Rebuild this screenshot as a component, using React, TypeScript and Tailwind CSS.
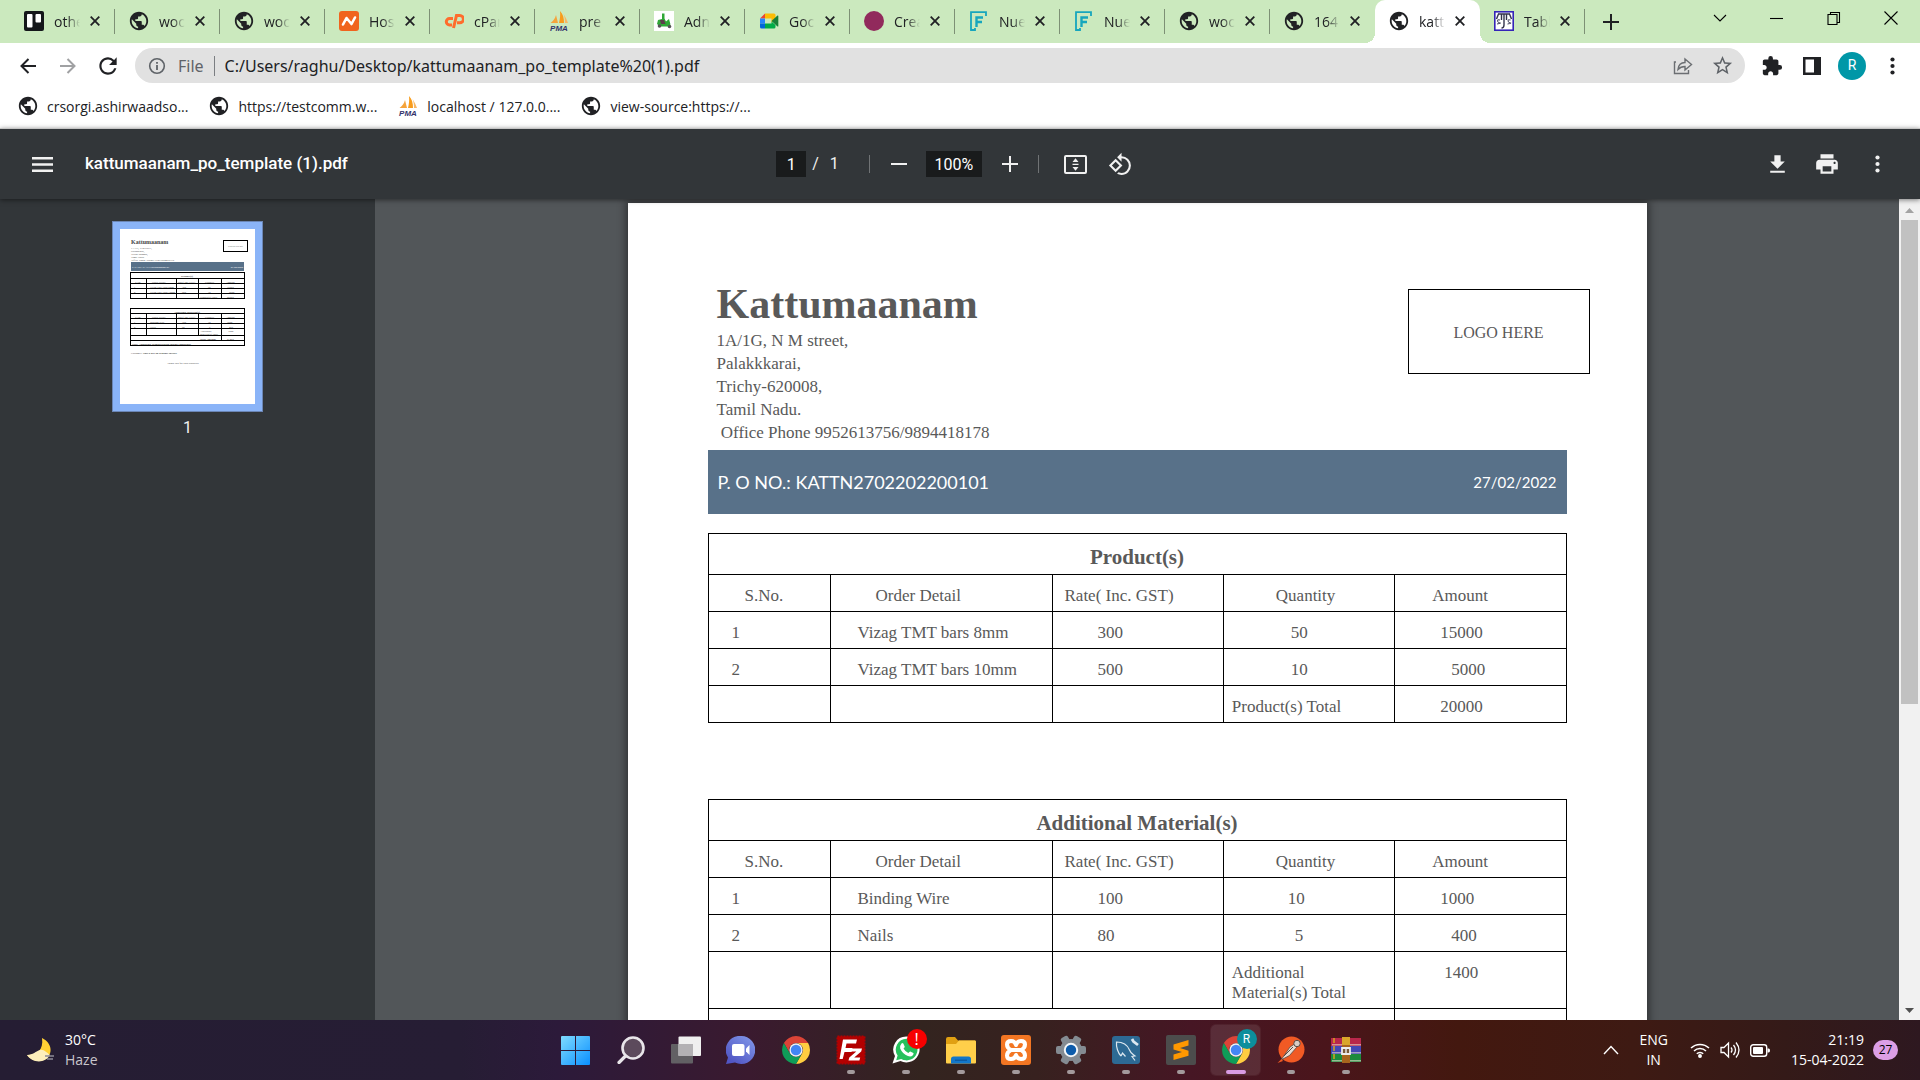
import type { ReactNode } from "react";
import clsx from "clsx";
import { MdExtension, MdPrint, MdPublic, MdRefresh, MdStarBorder } from "react-icons/md";

const UI = "font-['Open_Sans','Noto_Sans',sans-serif]";
const ROBOTO = "font-['Roboto',sans-serif]";
const SERIF = "font-['Liberation_Serif',serif]";

/* ---------- favicons ---------- */

function GlobeIcon() {
  return <MdPublic className="size-[22px] shrink-0 text-[#202124]" />;
}

function TrelloIcon() {
  return (
    <svg viewBox="0 0 20 20" className="size-5">
      <rect width="20" height="20" rx="2" fill="#14171a" />
      <rect x="3" y="3" width="5.5" height="13.5" rx="1" fill="#fff" />
      <rect x="11.5" y="3" width="5.5" height="8.5" rx="1" fill="#fff" />
    </svg>
  );
}

function NamecheapIcon() {
  return (
    <svg viewBox="0 0 20 20" className="size-5">
      <rect width="20" height="20" rx="3" fill="#f0641e" />
      <path d="M4 13.5 7.5 7l5 6L16 6.5" fill="none" stroke="#fff" strokeWidth="2.6" strokeLinecap="round" strokeLinejoin="round" />
    </svg>
  );
}

function PmaIcon() {
  return (
    <svg viewBox="0 0 20 20" className="size-5">
      <path d="M7 4 9 12H1.5C4 10 6 8 7 4Z" fill="#f5a33b" />
      <path d="M11 0c3 3 4 7 4 12h-5c1-4 1.500-8 1-12Z" fill="#f89c1c" />
      <path d="M14.500 3c2 3 3.500 6 4.500 9h-3c0-3-.3-6-1.500-9Z" fill="#f7b765" />
      <text x="10" y="19.500" textAnchor="middle" fontSize="8" fontWeight="700" fontStyle="italic" fill="#33336b" fontFamily="Liberation Sans">
        PMA
      </text>
    </svg>
  );
}

function ScooterIcon() {
  return (
    <svg viewBox="0 0 20 20" className="size-5">
      <rect width="20" height="20" fill="#fff" />
      <path d="M8 2.500h2.500v5l1.500 3 3-2.500 1.500 5.500-3 2H6L3 13l1-4 4-1Z" fill="#2fa836" />
      <path d="M6 9h4l1.500 4H7Z" fill="#5d3f4a" />
      <circle cx="5.500" cy="15" r="1.800" fill="#555" />
      <circle cx="15.500" cy="15.500" r="1.800" fill="#555" />
    </svg>
  );
}

function MeetIcon() {
  return (
    <svg viewBox="0 0 20 20" className="size-5">
      <path d="M1 7.500 6 2.500v5Z" fill="#ea4335" />
      <path d="M6 2.500h9a1.500 1.500 0 0 1 1.500 1.500v4l-4 3.500v-4H6Z" fill="#fbbc04" />
      <path d="M1 7.500h5v5H1Z" fill="#2684fc" />
      <path d="M1 12.500h5v5H2.500A1.500 1.500 0 0 1 1 16Z" fill="#0066da" />
      <path d="M6 12.500h6.500v-2l4 3.500v2a1.500 1.500 0 0 1-1.500 1.500H6Z" fill="#00ac47" />
      <path d="m12.500 10 6-5.500q.8-.4.8.6v9.800q0 1-.8.6Z" fill="#188038" />
    </svg>
  );
}

function BlobIcon() {
  return <span className="size-5 rounded-full bg-[#912a5c]" />;
}

function NueIcon() {
  return (
    <svg viewBox="0 0 20 20" className="size-5" fill="none" stroke="#17a6bd">
      <path d="M17 5V1.200H2V19h4v-2" strokeWidth="1.800" />
      <path d="M7.500 16V6.500H14M7.500 11H13" strokeWidth="2.400" />
    </svg>
  );
}

function TableauIcon() {
  return (
    <svg viewBox="0 0 20 20" className="size-5">
      <rect x=".8" y=".8" width="18.400" height="18.400" fill="#fff" stroke="#3524b8" strokeWidth="1.600" />
      <path d="M4 3h12M10 3v11q0 3-2.500 3M4.500 3 2.500 8M15.500 3l2 5M7.500 3v6M12.500 3v6" stroke="#33334d" strokeWidth="1.400" fill="none" />
      <path d="M6 9q-3-1-2.500 1T6 12t-3 1M16.500 9q-3-1-2.500 1t2.500 2-3 1" stroke="#44445e" fill="none" />
    </svg>
  );
}

function CpanelIcon() {
  return (
    <svg viewBox="0 0 20 20" className="size-5" fill="none" stroke="#ff6c2c" strokeWidth="3">
      <path d="M9 7.500H5.500a3.200 3.200 0 0 0 0 6.400H8" />
      <path d="m9.500 17 3-12.500h3.300a3.200 3.200 0 0 1 0 7.300H13" />
    </svg>
  );
}

function CloseGlyph() {
  return (
    <svg viewBox="0 0 10 10" className="size-[10px]" stroke="currentColor" strokeWidth="1.800">
      <path d="m.7.7 8.600 8.600M9.300.7.7 9.300" />
    </svg>
  );
}

/* ---------- browser chrome ---------- */

interface TabInfo {
  title: string;
  icon: () => ReactNode;
  active?: boolean;
}

const tabs: TabInfo[] = [
  { title: "othe", icon: TrelloIcon },
  { title: "woc", icon: GlobeIcon },
  { title: "woc", icon: GlobeIcon },
  { title: "Hos", icon: NamecheapIcon },
  { title: "cPan", icon: CpanelIcon },
  { title: "pre", icon: PmaIcon },
  { title: "Adn", icon: ScooterIcon },
  { title: "Goc", icon: MeetIcon },
  { title: "Crea", icon: BlobIcon },
  { title: "Nue", icon: NueIcon },
  { title: "Nue", icon: NueIcon },
  { title: "woc", icon: GlobeIcon },
  { title: "164", icon: GlobeIcon },
  { title: "katt", icon: GlobeIcon, active: true },
  { title: "Tabl", icon: TableauIcon },
];

function Tab({ tab, divider }: { tab: TabInfo; divider: boolean }) {
  const Icon = tab.icon;
  return (
    <div
      className={clsx(
        "relative flex h-full w-[105px] items-center pb-px pl-[14px]",
        tab.active && "rounded-t-[10px] bg-white"
      )}
    >
      {tab.active && (
        <>
          <span className="absolute bottom-0 -left-[10px] size-[10px] bg-[radial-gradient(circle_at_0_0,#cbe9be_10px,#fff_10px)]" />
          <span className="absolute -right-[10px] bottom-0 size-[10px] bg-[radial-gradient(circle_at_100%_0,#cbe9be_10px,#fff_10px)]" />
        </>
      )}
      <span className="flex size-5 shrink-0 items-center justify-center">
        <Icon />
      </span>
      <span className="ml-[10px] w-[26px] overflow-hidden text-[14px] whitespace-nowrap text-[#202124] [mask-image:linear-gradient(90deg,#000_50%,transparent)]">
        {tab.title}
      </span>
      <button type="button" aria-label={`Close ${tab.title}`} className="ml-[10px] text-[#202124]">
        <CloseGlyph />
      </button>
      {divider && <span className="absolute right-0 h-[25px] w-px bg-[#7d9075]" />}
    </div>
  );
}

function TabStrip() {
  return (
    <header className="flex h-[43px] shrink-0 items-center bg-[#cbe9be] pl-[10px]">
      {tabs.map((tab, i) => (
        <Tab key={i} tab={tab} divider={!tab.active && !tabs[i + 1]?.active} />
      ))}
      <button type="button" aria-label="New tab" className="ml-[18px] text-[#202124]">
        <svg viewBox="0 0 16 16" className="size-4" stroke="currentColor" strokeWidth="2">
          <path d="M8 0v16M0 8h16" />
        </svg>
      </button>
      <div className="mb-2 ml-auto flex pr-px text-black">
        <WindowButton label="Search tabs" d="m1 4 6 6 6-6" />
        <WindowButton label="Minimize" d="M0 7.500h13" />
        <WindowButton label="Restore" d="M1 3.500h9v10H1zM3.500 3.500v-2h9v10H10" />
        <WindowButton label="Close" d="m.5.500 13 13m0-13-13 13" />
      </div>
    </header>
  );
}

function WindowButton({ label, d }: { label: string; d: string }) {
  return (
    <button type="button" aria-label={label} className="flex w-[57px] justify-center">
      <svg viewBox="0 0 14 14" className="size-[14px]" fill="none" stroke="currentColor" strokeWidth="1.100">
        <path d={d} />
      </svg>
    </button>
  );
}

function AddressBar() {
  return (
    <div className="flex h-[45px] shrink-0 items-center bg-white pr-4 pl-4 text-[#202124]">
      <IconButton label="Back">
        <svg viewBox="0 0 16 16" className="size-4" fill="none" stroke="currentColor" strokeWidth="2">
          <path d="M16 8H1.500M8.500 1 1.500 8l7 7" />
        </svg>
      </IconButton>
      <IconButton label="Forward" className="ml-4 text-[#a0a1a3]">
        <svg viewBox="0 0 16 16" className="size-4" fill="none" stroke="currentColor" strokeWidth="2">
          <path d="M0 8h14.500M7.500 1l7 7-7 7" />
        </svg>
      </IconButton>
      <IconButton label="Reload" className="ml-4">
        <MdRefresh className="size-[26px] shrink-0" />
      </IconButton>
      <label className="ml-[15px] flex h-[35px] flex-1 items-center rounded-full bg-[#e1e1e1] px-[13px]">
        <svg viewBox="0 0 18 18" className="size-[18px]" fill="none" stroke="#5f6368" strokeWidth="1.600">
          <circle cx="9" cy="9" r="7.300" />
          <path d="M9 8v5M9 5v1.800" strokeWidth="1.800" />
        </svg>
        <span className="ml-[12px] font-['Noto_Sans',sans-serif] text-[16px] text-[#5f6368]">File</span>
        <span className="mx-[10px] h-5 w-px bg-[#7b7e82]" />
        <input
          aria-label="Address"
          readOnly
          value="C:/Users/raghu/Desktop/kattumaanam_po_template%20(1).pdf"
          className="min-w-0 flex-1 bg-transparent font-['Noto_Sans',sans-serif] text-[16px] outline-none"
        />
        <svg viewBox="0 0 20 20" className="mr-[18px] size-5" fill="none" stroke="#6b6e72" strokeWidth="1.400">
          <path d="M3 6H1.500v11.500h14V14M5 13.500c.5-5 3-7 7-7V3l6.500 5.500L12 14v-3.500c-3 0-5 .7-7 3Z" />
        </svg>
        <MdStarBorder className="-mr-[2px] size-[23px] text-[#5f6368]" />
      </label>
      <IconButton label="Extensions" className="ml-[15px]">
        <MdExtension className="size-[22px] shrink-0" />
      </IconButton>
      <IconButton label="Side panel" className="ml-4">
        <svg viewBox="0 0 18 18" className="size-[18px]" fill="currentColor">
          <path d="M0 0h18v18H0ZM2.500 2.500v13h8.500v-13Z" fillRule="evenodd" />
        </svg>
      </IconButton>
      <button type="button" className={`ml-[14px] flex size-7 items-center justify-center rounded-full bg-[#0097a7] text-[14px] text-white ${ROBOTO}`}>
        R
      </button>
      <IconButton label="Menu" className="ml-[14px]">
        <DotsIcon />
      </IconButton>
    </div>
  );
}

function DotsIcon() {
  return (
    <svg viewBox="0 0 5 18" className="h-[18px] w-[5px]" fill="currentColor">
      <circle cx="2.500" cy="2.500" r="2.100" />
      <circle cx="2.500" cy="9" r="2.100" />
      <circle cx="2.500" cy="15.500" r="2.100" />
    </svg>
  );
}

function IconButton({ label, className, children }: { label: string; className?: string; children: ReactNode }) {
  return (
    <button type="button" aria-label={label} className={clsx("flex size-6 shrink-0 items-center justify-center", className)}>
      {children}
    </button>
  );
}

const bookmarks = [
  { title: "crsorgi.ashirwaadso...", icon: GlobeIcon },
  { title: "https://testcomm.w...", icon: GlobeIcon },
  { title: "localhost / 127.0.0....", icon: PmaIcon },
  { title: "view-source:https://...", icon: GlobeIcon },
];

function BookmarksBar() {
  return (
    <nav className="flex h-10 shrink-0 items-center gap-[21px] bg-white pb-1 pl-[18px]">
      {bookmarks.map((b) => (
        <a key={b.title} href="#" className="flex items-center gap-[9px] text-[14px] text-[#202124]">
          <span className="flex size-5 items-center justify-center">
            <b.icon />
          </span>
          {b.title}
        </a>
      ))}
    </nav>
  );
}

/* ---------- pdf viewer ---------- */

function PdfToolbar() {
  return (
    <div className={`relative z-10 grid h-[71px] shrink-0 grid-cols-[1fr_auto_1fr] items-center border-t border-[#c4c4c4] bg-[#323639] text-[16px] text-[#f1f1f1] shadow-[0_1px_5px_rgba(0,0,0,0.5)] ${ROBOTO}`}>
      <div className="flex items-center pl-[30px]">
        <IconButton label="Toggle sidebar">
          <svg viewBox="0 0 21 15" className="h-[15px] w-[21px]" fill="currentColor">
            <path d="M0 0h21v2.500H0zM0 6.250h21v2.500H0zM0 12.500h21V15H0z" />
          </svg>
        </IconButton>
        <h1 className="ml-[31px] text-[17px] font-medium text-white">kattumaanam_po_template (1).pdf</h1>
      </div>
      <div className="flex items-center pr-[11px]">
        <input aria-label="Page number" defaultValue="1" className="h-[26px] w-[30px] bg-[#191b1c] text-center text-white" />
        <span className="ml-[6px]">/</span>
        <span className="ml-[11px]">1</span>
        <span className="ml-[30px] h-[18px] w-px bg-[#707375]" />
        <IconButton label="Zoom out" className="ml-[17px]">
          <svg viewBox="0 0 16 16" className="size-4" stroke="currentColor" strokeWidth="2"><path d="M0 8h16" /></svg>
        </IconButton>
        <input aria-label="Zoom level" defaultValue="100%" className="ml-[15px] h-[26px] w-14 bg-[#191b1c] text-center text-white" />
        <IconButton label="Zoom in" className="ml-[16px]">
          <svg viewBox="0 0 16 16" className="size-4" stroke="currentColor" strokeWidth="2"><path d="M0 8h16M8 0v16" /></svg>
        </IconButton>
        <span className="ml-[16px] h-[18px] w-px bg-[#707375]" />
        <IconButton label="Fit to page" className="ml-[25px]">
          <svg viewBox="0 0 23 19" className="h-[19px] w-[23px]" fill="currentColor">
            <path d="M2 0h19a2 2 0 0 1 2 2v15a2 2 0 0 1-2 2H2a2 2 0 0 1-2-2V2a2 2 0 0 1 2-2Zm0 2v15h19V2Z" fillRule="evenodd" />
            <path d="m11.500 3.200 3 3.800h-6ZM8.500 12h6l-3 3.800ZM8.500 8.800h6v1.200h-6z" />
          </svg>
        </IconButton>
        <IconButton label="Rotate" className="ml-[21px]">
          <svg viewBox="0 0 24 24" className="size-[25px] shrink-0" fill="currentColor">
            <path d="M7.340 6.410.860 12.900l6.490 6.480 6.490-6.480-6.500-6.490zM3.690 12.900l3.660-3.660L11 12.900l-3.660 3.660-3.650-3.660zm15.670-6.260A8.950 8.950 0 0 0 13 4V.760L8.760 5 13 9.240V6c1.790 0 3.580.680 4.950 2.050a7.007 7.007 0 0 1 0 9.900 6.973 6.973 0 0 1-7.790 1.440l-1.490 1.490A8.990 8.990 0 0 0 13 22c2.300 0 4.610-.880 6.360-2.640a8.980 8.980 0 0 0 0-12.720z" />
          </svg>
        </IconButton>
      </div>
      <div className="flex items-center justify-end gap-[26px] pr-[31px]">
        <IconButton label="Download">
          <svg viewBox="0 0 24 24" className="size-[25px] shrink-0" fill="currentColor">
            <path d="M19 9h-4V3H9v6H5l7 7 7-7zM5 18v2h14v-2H5z" />
          </svg>
        </IconButton>
        <IconButton label="Print">
          <MdPrint className="size-[26px] shrink-0" />
        </IconButton>
        <IconButton label="More actions">
          <DotsIcon />
        </IconButton>
      </div>
    </div>
  );
}

const thumbRules = [50, 55, 60, 65];
const thumbRules2 = [85, 90, 95, 100, 107, 112];

function Thumbnail() {
  return (
    <aside className="flex w-[375px] shrink-0 flex-col items-center bg-[#323639] pt-[22px]">
      <button type="button" aria-label="Page 1" className="border border-[#6b86b5] bg-[#8ab4f8] px-[7px] py-[7px]">
        <svg viewBox="0 0 135 175" className="h-[175px] w-[135px] bg-white" fill="#444" fontFamily="Liberation Serif" fontSize="2.700">
          <text x="11" y="15" fontSize="6" fontWeight="700">Kattumaanam</text>
          <text x="11" y="19.500">1A/1G, N M street,</text>
          <text x="11" y="22.500">Palakkkarai,</text>
          <text x="11" y="25.500">Trichy-620008,</text>
          <text x="11" y="28.500">Tamil Nadu.</text>
          <text x="11.500" y="31.500">Office Phone 9952613756/9894418178</text>
          <rect x="103.500" y="11.500" width="24" height="11" fill="none" stroke="#000" />
          <text x="115.500" y="18" textAnchor="middle">LOGO HERE</text>
          <rect x="11" y="33" width="113" height="9" fill="#587189" />
          <text x="12" y="38.500" fill="#fff">P. O NO.: KATTN2702202200101</text>
          <text x="123" y="38.500" fill="#fff" textAnchor="end">27/02/2022</text>
          <g stroke="#000" fill="none" shapeRendering="crispEdges">
            <rect x="10.500" y="43.500" width="114" height="26" />
            {thumbRules.map((y) => <path key={y} d={`M10 ${y - 0.5}h115`} />)}
            <path d="M26.500 50v20M56.500 50v20M78.500 50v20M101.500 50v20" />
            <rect x="10.500" y="79.500" width="114" height="37" />
            {thumbRules2.map((y) => <path key={y} d={`M10 ${y - 0.5}h115`} />)}
            <path d="M26.500 85v22M56.500 85v22M78.500 85v22M101.500 85v27" />
          </g>
          <text x="67" y="48" textAnchor="middle" fontWeight="700">Product(s)</text>
          <text x="67" y="83.500" textAnchor="middle" fontWeight="700">Additional Material(s)</text>
          {[53.5, 88.5].map((y) => (
            <g key={y}>
              <text x="15" y={y}>S.No.</text>
              <text x="32" y={y}>Order Detail</text>
              <text x="58" y={y}>Rate( Inc. GST)</text>
              <text x="85" y={y}>Quantity</text>
              <text x="106" y={y}>Amount</text>
            </g>
          ))}
          <text x="14" y="58.500">1</text><text x="30" y="58.500">Vizag TMT bars 8mm</text><text x="62" y="58.500">300</text><text x="88" y="58.500">50</text><text x="107" y="58.500">15000</text>
          <text x="14" y="63.500">2</text><text x="30" y="63.500">Vizag TMT bars 10mm</text><text x="62" y="63.500">500</text><text x="88" y="63.500">10</text><text x="109" y="63.500">5000</text>
          <text x="80" y="68.500">Product(s) Total</text><text x="107" y="68.500">20000</text>
          <text x="14" y="93.500">1</text><text x="30" y="93.500">Binding Wire</text><text x="62" y="93.500">100</text><text x="88" y="93.500">10</text><text x="107" y="93.500">1000</text>
          <text x="14" y="98.500">2</text><text x="30" y="98.500">Nails</text><text x="62" y="98.500">80</text><text x="89" y="98.500">5</text><text x="109" y="98.500">400</text>
          <text x="80" y="102.500">Additional</text><text x="80" y="105.500">Material(s) Total</text><text x="108" y="102.500">1400</text>
          <text x="80" y="110.500" fontWeight="700">Total Amount</text><text x="107" y="110.500">21400</text>
          <text x="12" y="115.500" fontWeight="700">Note: Additional Transportation charges applicable</text>
          <text x="11" y="125">Customer: <tspan fontWeight="700">This is not an original Invoice</tspan></text>
          <text x="63" y="135" textAnchor="middle">Thank you for your business!</text>
        </svg>
      </button>
      <span className={`mt-1 text-[16px] text-[#f1f1f1] ${ROBOTO}`}>1</span>
    </aside>
  );
}

interface Line {
  no: string;
  item: string;
  rate: string;
  qty: string;
  qtyPad: string;
  amount: string;
  amountPad: string;
}

const products: Line[] = [
  { no: "1", item: "Vizag TMT bars 8mm", rate: "300", qty: "50", qtyPad: "pl-[67px]", amount: "15000", amountPad: "pl-[45px]" },
  { no: "2", item: "Vizag TMT bars 10mm", rate: "500", qty: "10", qtyPad: "pl-[67px]", amount: "5000", amountPad: "pl-[56px]" },
];

const materials: Line[] = [
  { no: "1", item: "Binding Wire", rate: "100", qty: "10", qtyPad: "pl-[64px]", amount: "1000", amountPad: "pl-[45px]" },
  { no: "2", item: "Nails", rate: "80", qty: "5", qtyPad: "pl-[71px]", amount: "400", amountPad: "pl-[56px]" },
];

interface OrderTableProps {
  title: string;
  lines: Line[];
  totalLabel: string;
  total: string;
  totalPad: string;
  children?: ReactNode;
}

function OrderTable({ title, lines, totalLabel, total, totalPad, children }: OrderTableProps) {
  return (
    <table className="w-full table-fixed border-collapse text-[17px] leading-5 [&_td]:border [&_td]:border-black [&_td]:pt-[6px] [&_th]:border [&_th]:border-black [&_th]:pt-[6px]">
      <colgroup>
        <col className="w-[122px]" />
        <col className="w-[222px]" />
        <col />
        <col />
        <col />
      </colgroup>
      <thead>
        <tr className="h-[41px]">
          <th colSpan={5} className="text-[21px] font-bold">{title}</th>
        </tr>
        <tr className="h-[37px] text-left [&>th]:font-normal">
          <th className="pl-[36px]">S.No.</th>
          <th className="pl-[45px]">Order Detail</th>
          <th className="pl-[12px]">Rate( Inc. GST)</th>
          <th className="pl-[52px]">Quantity</th>
          <th className="pl-[37px]">Amount</th>
        </tr>
      </thead>
      <tbody>
        {lines.map((line) => (
          <tr key={line.no} className="h-[37px]">
            <td className="pl-[23px]">{line.no}</td>
            <td className="pl-[27px]">{line.item}</td>
            <td className="pl-[45px]">{line.rate}</td>
            <td className={line.qtyPad}>{line.qty}</td>
            <td className={line.amountPad}>{line.amount}</td>
          </tr>
        ))}
        <tr className="h-[37px] align-top">
          <td /><td /><td />
          <td className="pr-4 pb-[5px] pl-[8px]">
            <div className="pt-[5px]">{totalLabel}</div>
          </td>
          <td className={totalPad}>
            <div className="pt-[5px]">{total}</div>
          </td>
        </tr>
        {children}
      </tbody>
    </table>
  );
}

function PurchaseOrder() {
  return (
    <article className={`mx-auto mt-[4px] h-[1320px] w-[1019px] bg-white pt-[86px] text-[#595959] shadow-[0_0_8px_2px_rgba(0,0,0,0.45)] ${SERIF}`}>
      <div className="flex items-start justify-between pr-[57px] pl-[89px]">
        <div>
          <h2 className="text-[42px] leading-[30px] font-bold">Kattumaanam</h2>
          <address className="mt-[10px] text-[17px] leading-[23px] not-italic">
            1A/1G, N M street,
            <br />
            Palakkkarai,
            <br />
            Trichy-620008,
            <br />
            Tamil Nadu.
            <br />
            &nbsp;Office Phone 9952613756/9894418178
          </address>
        </div>
        <div className="flex h-[85px] w-[182px] items-center justify-center border border-black pt-[3px] text-[16px]">LOGO HERE</div>
      </div>
      <div className="mx-[80px] mt-[6px] flex h-16 items-center justify-between bg-[#587189] px-[10px] font-['Lato',sans-serif] text-white">
        <span className="text-[18px]">P. O NO.: KATTN2702202200101</span>
        <span className="text-[15px]">27/02/2022</span>
      </div>
      <div className="mx-[80px] mt-[19px] flex flex-col gap-[76px]">
        <OrderTable title="Product(s)" lines={products} totalLabel="Product(s) Total" total="20000" totalPad="pl-[45px]" />
        <OrderTable title="Additional Material(s)" lines={materials} totalLabel="Additional Material(s) Total" total="1400" totalPad="pl-[49px]">
          <tr className="h-[37px]">
            <td colSpan={4} />
            <td />
          </tr>
        </OrderTable>
      </div>
    </article>
  );
}

function Scrollbar() {
  return (
    <div className="flex w-[21px] shrink-0 flex-col items-center bg-[#f1f1f1]">
      <svg viewBox="0 0 21 21" className="size-[21px] shrink-0" fill="#a3a3a3"><path d="m10.500 9 4.500 5H6z" /></svg>
      <span className="h-[59%] w-[17px] bg-[#c1c1c1]" />
      <svg viewBox="0 0 21 21" className="mt-auto size-[21px] shrink-0" fill="#505050"><path d="M6 9h9l-4.500 5z" /></svg>
    </div>
  );
}

/* ---------- taskbar ---------- */

function ChromeLogo() {
  return (
    <svg viewBox="0 0 48 48" className="size-7">
      <path d="M3.220 12A24 24 0 0 1 44.780 12H24A12 12 0 0 0 13.610 30Z" fill="#db4437" />
      <path d="M44.780 12A24 24 0 0 1 24 48L34.390 30A12 12 0 0 0 24 12Z" fill="#ffcd40" />
      <path d="M24 48A24 24 0 0 1 3.220 12L13.610 30A12 12 0 0 0 34.390 30Z" fill="#0f9d58" />
      <circle cx="24" cy="24" r="11.500" fill="#f1f1f1" />
      <circle cx="24" cy="24" r="9" fill="#4285f4" />
    </svg>
  );
}

function StartLogo() {
  return (
    <svg viewBox="0 0 29 29" className="size-[29px]">
      <defs>
        <linearGradient id="win" x1="0" y1="0" x2="29" y2="29" gradientUnits="userSpaceOnUse">
          <stop stopColor="#7fdcff" />
          <stop offset="1" stopColor="#0a8fff" />
        </linearGradient>
      </defs>
      <path d="M0 1q0-1 1-1h13v14H0zM15 0h13q1 0 1 1v13H15zM0 15h14v14H1q-1 0-1-1zM15 15h14v13q0 1-1 1H15z" fill="url(#win)" />
    </svg>
  );
}

function SearchLogo() {
  return (
    <svg viewBox="0 0 28 28" className="size-7" fill="none" stroke="#e9e6ea">
      <circle cx="16" cy="12" r="10.500" fill="#5c4a5c" strokeWidth="2.600" />
      <path d="m8.500 20-6.500 6.500" strokeWidth="3.200" strokeLinecap="round" />
    </svg>
  );
}

function TaskViewLogo() {
  return (
    <svg viewBox="0 0 30 28" className="h-7 w-[30px]">
      <rect y="8" width="22" height="19.500" rx="1" fill="#626064" />
      <rect x="7.500" y=".5" width="22.500" height="19.500" rx="1" fill="#efefef" />
      <path d="M7.500 8H22v12H7.500z" fill="#b3b1b4" />
    </svg>
  );
}

function ChatLogo() {
  return (
    <svg viewBox="0 0 29 28" className="h-7 w-[29px]">
      <defs>
        <linearGradient id="chat" x1="25" y1="2" x2="6" y2="26" gradientUnits="userSpaceOnUse">
          <stop stopColor="#7d92e6" />
          <stop offset="1" stopColor="#5156c4" />
        </linearGradient>
      </defs>
      <path d="M15 0a14 14 0 1 1-6 26.500L0 28l2-6.500A14 14 0 0 1 15 0Z" fill="url(#chat)" />
      <rect x="6" y="8" width="12.500" height="12" rx="2" fill="#fff" />
      <path d="M20 12.500 23.500 9v10L20 15.500Z" fill="#fff" />
    </svg>
  );
}

function FilezillaLogo() {
  return (
    <svg viewBox="0 0 30 30" className="size-[30px]">
      <rect x="1.500" y="1.500" width="27" height="27" fill="#b30000" stroke="#b30000" strokeWidth="2" strokeDasharray="2 1" />
      <path d="M7 4.500h14l-1 4h-9.500l-1 4.500h7l-1 4h-7l-1.800 7H3.500Z" fill="#fff" />
      <path d="M15 13.500h11l-.8 3-7 6h6l-.8 3H12.500l.8-3 7-6h-6Z" fill="#fff" />
    </svg>
  );
}

function WhatsappLogo() {
  return (
    <span className="relative">
      <svg viewBox="0 0 28 28" className="size-7">
        <path d="M14.500.5a13 13 0 1 1-6 24.500L.5 27.500 3 20A13 13 0 0 1 14.500.5Z" fill="#fff" />
        <path d="M14.500 2.800a10.800 10.800 0 1 1-5.300 20.100l-5 1.300 1.400-4.700A10.800 10.800 0 0 1 14.500 2.800Z" fill="#25c15c" />
        <path d="M9.500 7.500q1-1 1.800 0l1.400 3q.2.800-1.200 2 1.800 3.200 4.800 4.500 1.500-1.800 2-1.500l3 1.500q.8.400-.4 2.200-2 2-5 .8-5.400-2-7.700-7.500-.5-3 1.300-5Z" fill="#fff" />
      </svg>
      <span className={`absolute -top-[7px] -right-[7px] flex size-5 items-center justify-center rounded-full bg-[#f70000] text-[16px] text-white ${UI}`}>!</span>
    </span>
  );
}

function FolderLogo() {
  return (
    <svg viewBox="0 0 30 27" className="h-[27px] w-[30px]">
      <path d="M0 2q0-2 2-2h7l3 3.500h17q1 0 1 1.500v6H0Z" fill="#e0a012" />
      <path d="M0 7h10l3-3.500h16q1 0 1 1.500v20.500q0 1-1 1H1q-1 0-1-1Z" fill="#ffcf4a" />
      <path d="M5 26.500V22q0-2.500 2.500-2.500h15Q25 19.500 25 22v4.500Z" fill="#1277c9" />
      <path d="M9 23.200h12" stroke="#0b4f91" />
    </svg>
  );
}

function XamppLogo() {
  return (
    <span className="flex size-[30px] items-center justify-center rounded-[3px] bg-[#f37623]">
      <svg viewBox="0 0 24 24" className="size-6" fill="none" stroke="#fff" strokeWidth="4" strokeLinejoin="round">
        <path d="M12 7q-1-4-5-4T3 6.500 7 12q-4 2-4 5.500T7 21t5-4q1 4 5 4t4-3.500-4-5.500q4-2 4-5.500T17 3t-5 4Z" />
        <path d="M7 12h10" />
      </svg>
    </span>
  );
}

function SettingsLogo() {
  return (
    <svg viewBox="0 0 30 30" className="size-[30px]">
      <g fill="#848b92">
        <circle cx="15" cy="15" r="11" />
        {[0, 60, 120].map((a) => <rect key={a} x="0" y="11" width="30" height="8" rx="2" transform={`rotate(${a} 15 15)`} />)}
      </g>
      <circle cx="15" cy="15" r="6.200" fill="#0d5cab" stroke="#f3f6f8" strokeWidth="2" />
    </svg>
  );
}

function WorkbenchLogo() {
  return (
    <svg viewBox="0 0 28 28" className="size-7" fill="none" stroke="#dce8f0">
      <rect width="28" height="28" rx="3" fill="#2d6a94" stroke="none" />
      <path d="M9 20c-3-3-5-9-4.500-14 6 0 11 3 13 8 1 3 3 4 5.500 6l-3 .5 3 4M9 20l1.500-3 3 3.500" strokeWidth="1.200" />
      <path d="m20 3 1.500 2.500L26 9" strokeWidth="2.800" />
    </svg>
  );
}

function SublimeLogo() {
  return (
    <svg viewBox="0 0 30 30" className="size-[30px]">
      <rect width="30" height="30" rx="2" fill="#4c4c4c" />
      <path d="M7.500 9.500 22.500 5v5.500L14 13l8.500 2.700v5L7.500 25v-5.500l8.500-2.500-8.500-2.500Z" fill="#ff9800" />
    </svg>
  );
}

function ChromeProfileLogo() {
  return (
    <span className="relative">
      <ChromeLogo />
      <span className={`absolute -top-[7px] -right-[7px] flex size-5 items-center justify-center rounded-full bg-[#0c8f9c] text-[12px] text-white ${ROBOTO}`}>R</span>
    </span>
  );
}

function PostmanLogo() {
  return (
    <svg viewBox="0 0 28 28" className="size-7">
      <circle cx="14.500" cy="13.500" r="13" fill="#f15a24" />
      <path d="M4 24 13 11l4.500-3 2 3.500-7 8Z" fill="#e9dcd2" stroke="#5b4a44" strokeWidth=".8" />
      <path d="m7 20 9-9" stroke="#5b4a44" />
      <circle cx="20" cy="7.500" r="3.200" fill="#d8cdc5" stroke="#5b4a44" />
      <path d="m.5 27 4-4 1.500 2Z" fill="#f15a24" />
    </svg>
  );
}

function WinrarLogo() {
  return (
    <svg viewBox="0 0 30 26" className="h-[26px] w-[30px]">
      <path d="M0 1h30v8H0z" fill="#b8274b" />
      <path d="M0 9h30v8H0z" fill="#4347b5" />
      <path d="M0 17h30v8H0z" fill="#1c8a3c" />
      <path d="M1 7h29v1.500H1zM1 15h29v1.500H1zM1 23h29v1.500H1z" fill="#e6dccb" opacity=".6" />
      <path d="M3 1v24" stroke="#d8a51d" strokeWidth="1.500" strokeDasharray="5 3" />
      <path d="M11 0h8v26h-8z" fill="#a8651d" />
      <path d="M11 0h8v8h-8z" fill="#d9a62a" />
      <path d="M11 11h8v6h-8z" fill="#7a5a3a" stroke="#ececec" strokeWidth="1.800" />
      <path d="M15 11v5" stroke="#ececec" strokeWidth="1.400" />
    </svg>
  );
}

interface TaskApp {
  name: string;
  icon: () => ReactNode;
  state?: "running" | "active";
}

const apps: TaskApp[] = [
  { name: "Start", icon: StartLogo },
  { name: "Search", icon: SearchLogo },
  { name: "Task view", icon: TaskViewLogo },
  { name: "Chat", icon: ChatLogo },
  { name: "Google Chrome", icon: ChromeLogo },
  { name: "FileZilla", icon: FilezillaLogo, state: "running" },
  { name: "WhatsApp", icon: WhatsappLogo, state: "running" },
  { name: "File Explorer", icon: FolderLogo, state: "running" },
  { name: "XAMPP", icon: XamppLogo, state: "running" },
  { name: "Settings", icon: SettingsLogo, state: "running" },
  { name: "MySQL Workbench", icon: WorkbenchLogo, state: "running" },
  { name: "Sublime Text", icon: SublimeLogo, state: "running" },
  { name: "Chrome profile R", icon: ChromeProfileLogo, state: "active" },
  { name: "Postman", icon: PostmanLogo, state: "running" },
  { name: "WinRAR", icon: WinrarLogo, state: "running" },
];

function Taskbar() {
  return (
    <footer className="grid h-[60px] shrink-0 grid-cols-[1fr_auto_1fr] items-center bg-[linear-gradient(90deg,#251d33_0%,#261d34_24%,#2c1a3a_29%,#3a1a2f_39%,#33241f_48%,#37211f_54%,#461624_62%,#4a151b_69%,#43180f_76%,#3e1a13_85%,#341a18_93%,#2e1820_100%)] text-[14px] leading-5 text-white">
      <button type="button" className="flex items-center pl-[27px] text-left">
        <svg viewBox="0 0 28 26" className="h-[26px] w-7">
          <path d="M15 1c7 3 12 12 6 19-6 6-16 5-21-2 8 1 17-4 15-17Z" fill="#ffd034" />
          <path d="M0 18c6 0 9-4 13-5 4-1 7 3 10 5-5 9-18 8-23 0Z" fill="#fdeebb" />
          <path d="M18 19h9M20 22h6" stroke="#8d8a96" strokeWidth="1.500" />
        </svg>
        <span className="ml-[10px]">
          30°C
          <span className="block text-[#c9c6cc]">Haze</span>
        </span>
      </button>
      <div className="flex pl-px">
        {apps.map((app) => (
          <button
            key={app.name}
            type="button"
            aria-label={app.name}
            className={clsx(
              "relative mx-[3px] flex h-[50px] w-[49px] items-center justify-center rounded-[5px]",
              app.state === "active" && "bg-white/10 ring-1 ring-white/5"
            )}
          >
            <app.icon />
            {app.state && (
              <span
                className={clsx(
                  "absolute bottom-px h-1 rounded-full",
                  app.state === "active" ? "w-5 bg-[#d99be3]" : "w-2 bg-[#a39a9c]"
                )}
              />
            )}
          </button>
        ))}
      </div>
      <div className="flex items-center justify-end pr-[22px]">
        <button type="button" aria-label="Show hidden icons">
          <svg viewBox="0 0 16 10" className="h-[10px] w-4" fill="none" stroke="#fff" strokeWidth="1.400"><path d="m1 9 7-7.500L15 9" /></svg>
        </button>
        <button type="button" className="ml-5 text-center">
          ENG
          <br />
          IN
        </button>
        <button type="button" aria-label="Network, volume, battery" className="ml-[22px] flex items-center gap-[10px]">
          <svg viewBox="0 0 20 16" className="h-4 w-5" fill="none" stroke="#fff" strokeWidth="1.500">
            <path d="M1 6a13 13 0 0 1 18 0M4 9a8.500 8.500 0 0 1 12 0M6.800 11.800a4.500 4.500 0 0 1 6.400 0" />
            <circle cx="10" cy="14" r="1.200" fill="#fff" />
          </svg>
          <svg viewBox="0 0 20 18" className="h-[18px] w-5" fill="none" stroke="#fff" strokeWidth="1.300">
            <path d="M1 6.500h3L8.500 2v14L4 11.500H1ZM11 6.500q2 2.500 0 5M13.500 4q4 5 0 10M16 1.500q6 7.500 0 15" />
          </svg>
          <svg viewBox="0 0 20 13" className="h-[13px] w-5">
            <rect x=".7" y=".7" width="16" height="11.600" rx="2.500" fill="none" stroke="#fff" strokeWidth="1.400" />
            <rect x="3" y="3" width="10" height="7" rx="1" fill="#fff" />
            <path d="M17.500 4.500h1.200q1.300 0 1.300 2t-1.300 2h-1.200z" fill="#fff" />
          </svg>
        </button>
        <button type="button" className="ml-[21px] text-right">
          21:19
          <br />
          15-04-2022
        </button>
        <span className="ml-[9px] flex h-5 w-[25px] items-center justify-center rounded-full bg-[#dc9fe6] text-[12px] text-black">27</span>
      </div>
    </footer>
  );
}

export default function App() {
  return (
    <div className={`flex h-screen flex-col overflow-hidden bg-[#525659] ${UI}`}>
      <TabStrip />
      <AddressBar />
      <BookmarksBar />
      <PdfToolbar />
      <main className="flex min-h-0 flex-1">
        <Thumbnail />
        <div className="min-w-0 flex-1 overflow-hidden">
          <PurchaseOrder />
        </div>
        <Scrollbar />
      </main>
      <Taskbar />
    </div>
  );
}
